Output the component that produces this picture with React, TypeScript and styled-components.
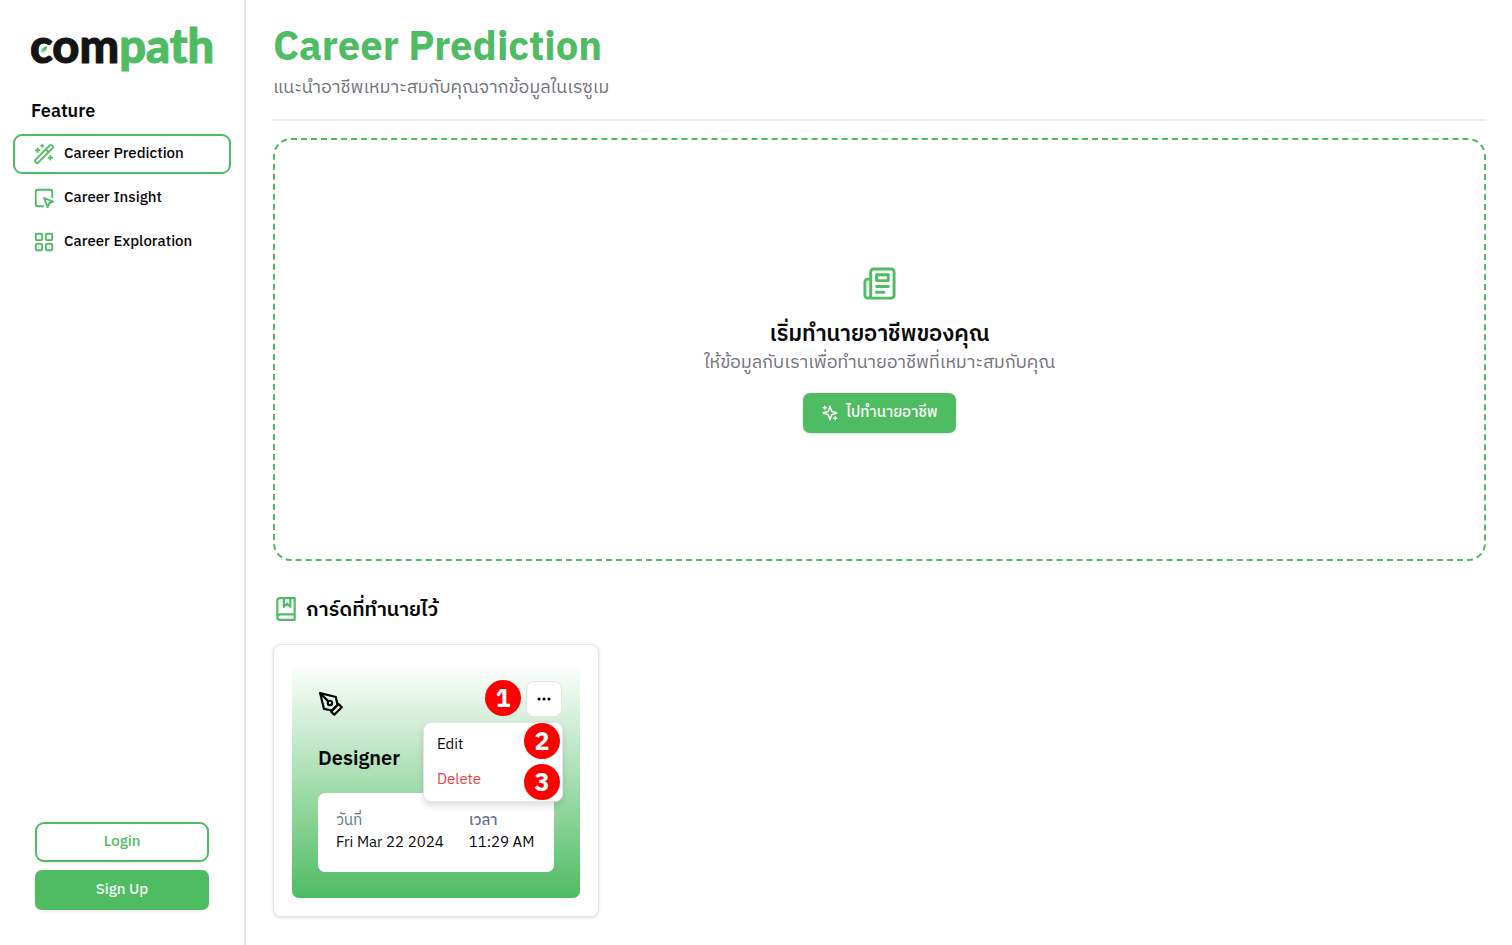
import React from "react";
import styled, { createGlobalStyle, css } from "styled-components";

const green = "#4fbc63";
const ink = "#09090b";
const muted = "#71717a";
const line = "#e4e4e7";

const GlobalStyle = createGlobalStyle`
  * { box-sizing: border-box; }
  body {
    margin: 0;
    background: #fff;
    color: ${ink};
    font-family: "IBM Plex Sans Thai", "Noto Sans Thai", "Noto Sans", sans-serif;
    font-size: 15px;
    line-height: 22px;
  }
  button { font: inherit; cursor: pointer; }
  h1, h2, h3, p, ul, dl, dd { margin: 0; padding: 0; }
`;

const Page = styled.div`
  display: flex;
  min-height: 100vh;
`;

const Sidebar = styled.aside`
  display: flex;
  flex-direction: column;
  flex: 0 0 246px;
  padding: 21px 13px 35px;
  border-right: 2px solid ${line};
`;

const Logo = styled.a`
  position: relative;
  align-self: flex-start;
  margin-left: 17px;
  color: #141414;
  font-family: Lato, sans-serif;
  font-size: 47px;
  font-weight: 900;
  line-height: 48px;
  text-decoration: none;
  -webkit-text-stroke: 1px currentColor;
`;

const LogoAccent = styled.span`
  color: ${green};
`;

const LogoLeaf = styled.svg`
  position: absolute;
  left: 8px;
  top: 22px;
  width: 12px;
  height: 12px;
`;

const FeatureTitle = styled.h2`
  margin: 31px 0 9px 18px;
  font-size: 18px;
  font-weight: 600;
  line-height: 25px;
`;

const NavList = styled.ul`
  display: flex;
  flex-direction: column;
  gap: 4px;
  list-style: none;
`;

const NavLink = styled.a<{ $active?: boolean }>`
  display: flex;
  align-items: center;
  gap: 9px;
  height: 40px;
  padding: 0 18px;
  border: 2px solid ${(p) => (p.$active ? green : "transparent")};
  border-radius: 9px;
  color: inherit;
  font-weight: 500;
  text-decoration: none;
`;

const Icon = styled.svg<{ $size: number; $color?: string; $weight?: number }>`
  flex: none;
  width: ${(p) => p.$size}px;
  height: ${(p) => p.$size}px;
  fill: none;
  stroke: ${(p) => p.$color ?? green};
  stroke-width: ${(p) => p.$weight ?? 2};
  stroke-linecap: round;
  stroke-linejoin: round;
`;

const AuthActions = styled.div`
  display: flex;
  flex-direction: column;
  gap: 8px;
  margin-top: auto;
  padding: 0 22px;
`;

const Button = styled.button<{ $outline?: boolean }>`
  display: inline-flex;
  align-items: center;
  justify-content: center;
  gap: 7px;
  height: 40px;
  padding: 0 18px;
  border: 0;
  border-radius: 7px;
  background: ${green};
  color: #fafafa;
  font-weight: 500;
  box-shadow: 0 1px 3px rgba(0, 0, 0, 0.12);
  ${(p) =>
    p.$outline &&
    css`
      border: 2px solid ${green};
      border-radius: 9px;
      background: #fff;
      color: ${green};
    `}
`;

const Main = styled.main`
  flex: 1;
  min-width: 0;
  padding: 24px 26px 28px 27px;
`;

const PageHeader = styled.header`
  padding-bottom: 17px;
  border-bottom: 2px solid #eeeeef;
`;

const PageTitle = styled.h1`
  color: ${green};
  font-size: 40px;
  font-weight: 700;
  line-height: 48px;
`;

const Subtitle = styled.p`
  color: ${muted};
  font-size: 18px;
  line-height: 28px;
`;

const PageSubtitle = styled(Subtitle)`
  margin-top: 2px;
`;

const StartPanel = styled.section`
  display: flex;
  flex-direction: column;
  align-items: center;
  justify-content: center;
  height: 423px;
  margin-top: 17px;
  border: 2px dashed ${green};
  border-radius: 18px;
`;

const StartTitle = styled.h2`
  margin-top: 20px;
  font-size: 22px;
  font-weight: 600;
  line-height: 28px;
`;

const StartButton = styled(Button)`
  margin-top: 16px;
`;

const SavedHeader = styled.h2`
  display: flex;
  align-items: center;
  gap: 7px;
  margin-top: 32px;
  font-size: 20px;
  font-weight: 600;
  line-height: 28px;
`;

const SavedTitle = styled.span`
  padding-top: 4px;
`;

const CareerCard = styled.article`
  width: 326px;
  margin-top: 19px;
  padding: 18px;
  border: 1px solid ${line};
  border-radius: 8px;
  box-shadow: 0 1px 3px rgba(0, 0, 0, 0.14);
`;

const CareerBody = styled.div`
  padding: 18px 26px 26px;
  border-radius: 7px;
  background: linear-gradient(to bottom, #fff, ${green});
`;

const CareerTop = styled.div`
  display: flex;
  align-items: flex-end;
  justify-content: space-between;
  margin-right: -8px;
`;

const MenuAnchor = styled.div`
  position: relative;
`;

const MoreButton = styled.button`
  display: flex;
  align-items: center;
  justify-content: center;
  width: 36px;
  height: 36px;
  padding: 0;
  border: 1px solid ${line};
  border-radius: 8px;
  background: #fff;
`;

const Menu = styled.div`
  position: absolute;
  z-index: 1;
  top: 41px;
  right: -1px;
  width: 140px;
  padding: 4px;
  border: 1px solid ${line};
  border-radius: 8px;
  background: #fff;
  box-shadow: 0 4px 6px rgba(0, 0, 0, 0.12);
`;

const MenuItem = styled.button<{ $danger?: boolean }>`
  display: block;
  width: 100%;
  height: 35px;
  padding: 0 9px;
  border: 0;
  background: none;
  color: ${(p) => (p.$danger ? "#ef4444" : ink)};
  text-align: left;
`;

const Badge = styled.span<{ $top: number; $right: number }>`
  position: absolute;
  z-index: 2;
  top: ${(p) => p.$top}px;
  right: ${(p) => p.$right}px;
  width: 36px;
  height: 36px;
  border-radius: 50%;
  background: #fe0000;
  color: #fff;
  font-size: 25px;
  font-weight: 700;
  line-height: 39px;
  text-align: center;
`;

const CareerName = styled.h3`
  margin-top: 27px;
  font-size: 20px;
  font-weight: 600;
  line-height: 31px;
`;

const Details = styled.dl`
  display: flex;
  gap: 25px;
  height: 79px;
  margin-top: 18px;
  padding: 17px 18px;
  border-radius: 7px;
  background: #fff;
  white-space: nowrap;
`;

const DetailLabel = styled.dt<{ $strong?: boolean }>`
  color: #64748b;
  font-weight: ${(p) => (p.$strong ? 500 : 400)};
`;

export default function App() {
  return (
    <>
      <GlobalStyle />
      <Page>
        <Sidebar>
          <Logo href="#">
            com<LogoAccent>path</LogoAccent>
            <LogoLeaf viewBox="0 0 12 12" aria-hidden="true">
              <circle cx="5" cy="7" r="4" fill="#ededee" />
              <path d="M3.500 9C2.800 6.500 5.500 3.500 9.200 3.200C9.200 6.500 6.500 9 3.500 9Z" fill={green} />
              <path d="M3 9.500L6.500 6" stroke="#fff" strokeWidth="0.5" />
            </LogoLeaf>
          </Logo>
          <FeatureTitle>Feature</FeatureTitle>
          <nav>
            <NavList>
              <li>
                <NavLink href="#" $active aria-current="page">
                  <Icon viewBox="0 0 24 24" $size={22}>
                    <path d="m21.64 3.64-1.28-1.28a1.21 1.21 0 0 0-1.72 0L2.36 18.64a1.21 1.21 0 0 0 0 1.72l1.28 1.28a1.2 1.2 0 0 0 1.72 0L21.64 5.36a1.2 1.2 0 0 0 0-1.72" />
                    <path d="m14 7 3 3M5 6v4M19 14v4M10 2v2M7 8H3M21 16h-4M11 3H9" />
                  </Icon>
                  Career Prediction
                </NavLink>
              </li>
              <li>
                <NavLink href="#">
                  <Icon viewBox="0 0 24 24" $size={22}>
                    <path d="M21 11V5a2 2 0 0 0-2-2H5a2 2 0 0 0-2 2v14a2 2 0 0 0 2 2h6" />
                    <path d="m12 12 4 10 1.7-4.3L22 16Z" />
                  </Icon>
                  Career Insight
                </NavLink>
              </li>
              <li>
                <NavLink href="#">
                  <Icon viewBox="0 0 24 24" $size={22}>
                    <rect x="3" y="3" width="7" height="7" rx="1" />
                    <rect x="14" y="3" width="7" height="7" rx="1" />
                    <rect x="14" y="14" width="7" height="7" rx="1" />
                    <rect x="3" y="14" width="7" height="7" rx="1" />
                  </Icon>
                  Career Exploration
                </NavLink>
              </li>
            </NavList>
          </nav>
          <AuthActions>
            <Button $outline>Login</Button>
            <Button>Sign Up</Button>
          </AuthActions>
        </Sidebar>

        <Main>
          <PageHeader>
            <PageTitle>Career Prediction</PageTitle>
            <PageSubtitle>แนะนำอาชีพเหมาะสมกับคุณจากข้อมูลในเรซูเม</PageSubtitle>
          </PageHeader>

          <StartPanel>
            <Icon viewBox="0 0 24 24" $size={35}>
              <path d="M4 22h16a2 2 0 0 0 2-2V4a2 2 0 0 0-2-2H8a2 2 0 0 0-2 2v16a2 2 0 0 1-2 2Zm0 0a2 2 0 0 1-2-2v-9c0-1.1.9-2 2-2h2" />
              <path d="M18 14h-8M15 18h-5M10 6h8v4h-8V6Z" />
            </Icon>
            <StartTitle>เริ่มทำนายอาชีพของคุณ</StartTitle>
            <Subtitle>ให้ข้อมูลกับเราเพื่อทำนายอาชีพที่เหมาะสมกับคุณ</Subtitle>
            <StartButton>
              <Icon viewBox="0 0 24 24" $size={18} $color="#fafafa">
                <path d="m12 3-1.912 5.813a2 2 0 0 1-1.275 1.275L3 12l5.813 1.912a2 2 0 0 1 1.275 1.275L12 21l1.912-5.813a2 2 0 0 1 1.275-1.275L21 12l-5.813-1.912a2 2 0 0 1-1.275-1.275L12 3Z" />
                <path d="M5 3v4M19 17v4M3 5h4M17 19h4" />
              </Icon>
              ไปทำนายอาชีพ
            </StartButton>
          </StartPanel>

          <SavedHeader>
            <Icon viewBox="0 0 24 24" $size={26}>
              <path d="M4 19.5v-15A2.5 2.5 0 0 1 6.5 2H20v20H6.5a2.5 2.5 0 0 1 0-5H20" />
              <path d="M10 2v8l3-3 3 3V2" />
            </Icon>
            <SavedTitle>การ์ดที่ทำนายไว้</SavedTitle>
          </SavedHeader>

          <CareerCard>
            <CareerBody>
              <CareerTop>
                <Icon viewBox="0 0 24 24" $size={26} $color="#000">
                  <path d="m12 19 7-7 3 3-7 7-3-3z" />
                  <path d="m18 13-1.500-7.500L2 2l3.500 14.500L13 18l5-5z" />
                  <path d="m2 2 7.586 7.586" />
                  <circle cx="11" cy="11" r="2" />
                </Icon>
                <MenuAnchor>
                  <MoreButton aria-label="More options" aria-expanded="true">
                    <Icon viewBox="0 0 18 18" $size={18} $color="#000" $weight={3}>
                      <path d="M4 9h.01M9 9h.01M14 9h.01" />
                    </Icon>
                  </MoreButton>
                  <Badge $top={-1} $right={41}>1</Badge>
                  <Menu role="menu">
                    <MenuItem role="menuitem">Edit</MenuItem>
                    <MenuItem role="menuitem" $danger>Delete</MenuItem>
                    <Badge $top={0} $right={2}>2</Badge>
                    <Badge $top={41} $right={2}>3</Badge>
                  </Menu>
                </MenuAnchor>
              </CareerTop>
              <CareerName>Designer</CareerName>
              <Details>
                <div>
                  <DetailLabel>วันที่</DetailLabel>
                  <dd>Fri Mar 22 2024</dd>
                </div>
                <div>
                  <DetailLabel $strong>เวลา</DetailLabel>
                  <dd>11:29 AM</dd>
                </div>
              </Details>
            </CareerBody>
          </CareerCard>
        </Main>
      </Page>
    </>
  );
}
